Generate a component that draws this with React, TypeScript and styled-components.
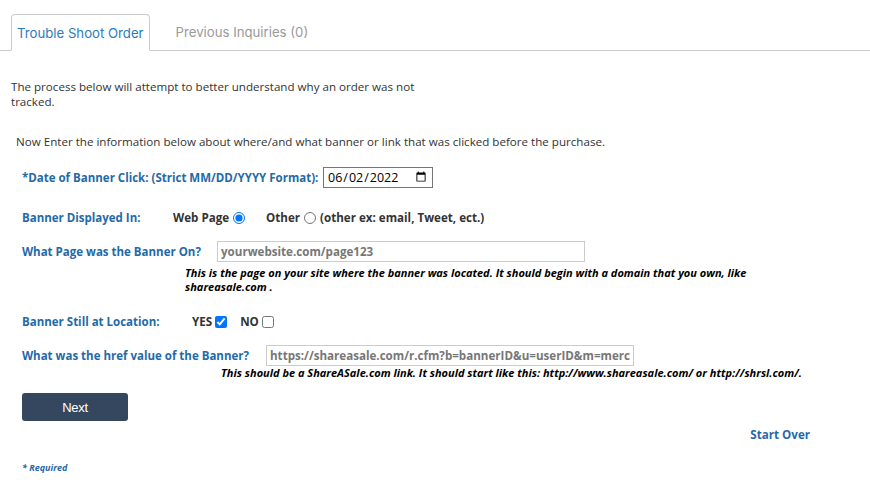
import React from "react";
import styled, { createGlobalStyle } from "styled-components";

const Global = createGlobalStyle`
  html, body { margin: 0; padding: 0; background: #fff; }
  body { font-family: "Open Sans", "Liberation Sans", sans-serif; color: #333; }
`;

const Page = styled.div`
  width: 870px;
  height: 493px;
  position: relative;
  overflow: hidden;
`;

const TabBar = styled.div`
  display: flex;
  align-items: flex-end;
  margin-top: 14px;
  padding-left: 11px;
  border-bottom: 1px solid #ccc;
  height: 36px;
  box-sizing: content-box;
`;

const Tab = styled.div<{ $active?: boolean }>`
  height: ${(p) => (p.$active ? "37px" : "36px")};
  margin-bottom: ${(p) => (p.$active ? "-1px" : "0")};
  box-sizing: border-box;
  padding: 0 ${(p) => (p.$active ? "5px" : "25px")};
  display: flex;
  align-items: center;
  font-family: Inter, "Liberation Sans", sans-serif;
  font-size: 13.2px;
  color: ${(p) => (p.$active ? "#2b7cbb" : "#9a9a9a")};
  background: #fff;
  border: ${(p) => (p.$active ? "1px solid #ccc" : "1px solid transparent")};
  border-bottom-color: ${(p) => (p.$active ? "#fff" : "transparent")};
  border-radius: 4px 4px 0 0;
`;

const Intro = styled.p`
  margin: 28px 0 0 11px;
  width: 410px;
  font-size: 11.6px;
  line-height: 15px;
  color: #333;
`;

const Lead = styled.p`
  margin: 25px 0 0 16px;
  font-size: 11.6px;
  line-height: 15px;
  color: #333;
`;

const Form = styled.div`
  padding-left: 22px;
  display: flex;
  flex-direction: column;
`;

const Row = styled.div<{ $top: number }>`
  display: flex;
  align-items: center;
  margin-top: ${(p) => p.$top}px;
`;

const Label = styled.span<{ $width: number }>`
  font-size: 11.5px;
  font-weight: 700;
  color: #1f6aa8;
  width: ${(p) => p.$width}px;
  flex: none;
  white-space: nowrap;
`;

const Option = styled.label<{ $gap?: number }>`
  display: inline-flex;
  align-items: center;
  font-size: 11.6px;
  font-weight: 700;
  color: #333;
  margin-right: ${(p) => p.$gap ?? 0}px;
  white-space: nowrap;
`;

const Radio = styled.input`
  margin: 0 4px 0 4px;
  width: 12px;
  height: 12px;
`;

const Check = styled.input`
  margin: 0 0 0 3px;
  width: 12px;
  height: 12px;
`;

const DateInput = styled.input`
  width: 110px;
  height: 21px;
  box-sizing: border-box;
  border: 1px solid #767676;
  border-radius: 0;
  font-family: "Open Sans", "Liberation Sans", sans-serif;
  font-size: 12.5px;
  padding: 0 3px;
  color: #000;
`;

const TextInput = styled.input`
  width: 368px;
  height: 21px;
  box-sizing: border-box;
  border: 1px solid #ccc;
  font-family: "Open Sans", "Liberation Sans", sans-serif;
  font-weight: 700;
  font-size: 11.6px;
  color: #777;
  padding: 0 3px;
  &::placeholder { color: #777; opacity: 1; }
`;

const Help = styled.div<{ $left: number; $top: number }>`
  margin: ${(p) => p.$top}px 0 0 ${(p) => p.$left}px;
  font-size: 11px;
  font-weight: 700;
  font-style: italic;
  line-height: 14px;
  color: #000;
  width: 600px;
`;

const NextButton = styled.button`
  margin-top: 13px;
  width: 106px;
  height: 28px;
  border: none;
  border-radius: 3px;
  background: #34475f;
  color: #fff;
  font-family: Arial, "Liberation Sans", sans-serif;
  font-size: 13px;
  letter-spacing: -0.3px;
  cursor: pointer;
`;

const FooterRow = styled.div`
  display: flex;
  justify-content: flex-end;
  padding-right: 60px;
  margin-top: 6px;
`;

const StartOver = styled.a`
  font-size: 11.6px;
  font-weight: 700;
  color: #1f6aa8;
  text-decoration: none;
`;

const Required = styled.div`
  margin: 19px 0 0 22px;
  font-size: 9px;
  font-weight: 700;
  font-style: italic;
  color: #1f6aa8;
`;

export default function App() {
  return (
    <Page>
      <Global />
      <TabBar>
        <Tab $active>Trouble Shoot Order</Tab>
        <Tab>Previous Inquiries (0)</Tab>
      </TabBar>
      <Intro>
        The process below will attempt to better understand why an order was not tracked.
      </Intro>
      <Lead>
        Now Enter the information below about where/and what banner or link that was clicked before the purchase.
      </Lead>
      <Form>
        <Row $top={18}>
          <Label $width={301}>*Date of Banner Click: (Strict MM/DD/YYYY Format):</Label>
          <DateInput type="date" defaultValue="2022-06-02" />
        </Row>
        <Row $top={22}>
          <Label $width={151}>Banner Displayed In:</Label>
          <Option $gap={17}>
            Web Page<Radio type="radio" name="disp" defaultChecked />
          </Option>
          <Option>
            Other<Radio type="radio" name="disp" />(other ex: email, Tweet, ect.)
          </Option>
        </Row>
        <Row $top={16}>
          <Label $width={195}>What Page was the Banner On?</Label>
          <TextInput placeholder="yourwebsite.com/page123" />
        </Row>
        <Help $left={163} $top={4}>
          This is the page on your site where the banner was located. It should begin with a domain that you own, like shareasale.com .
        </Help>
        <Row $top={20}>
          <Label $width={170}>Banner Still at Location:</Label>
          <Option $gap={13}>
            YES<Check type="checkbox" defaultChecked />
          </Option>
          <Option>
            NO<Check type="checkbox" />
          </Option>
        </Row>
        <Row $top={16}>
          <Label $width={244}>What was the href value of the Banner?</Label>
          <TextInput defaultValue="https://shareasale.com/r.cfm?b=bannerID&u=userID&m=merchantID" />
        </Row>
        <Help $left={199} $top={0}>
          This should be a ShareASale.com link. It should start like this: http://www.shareasale.com/ or http://shrsl.com/.
        </Help>
        <div>
          <NextButton>Next</NextButton>
        </div>
      </Form>
      <FooterRow>
        <StartOver href="#">Start Over</StartOver>
      </FooterRow>
      <Required>* Required</Required>
    </Page>
  );
}
